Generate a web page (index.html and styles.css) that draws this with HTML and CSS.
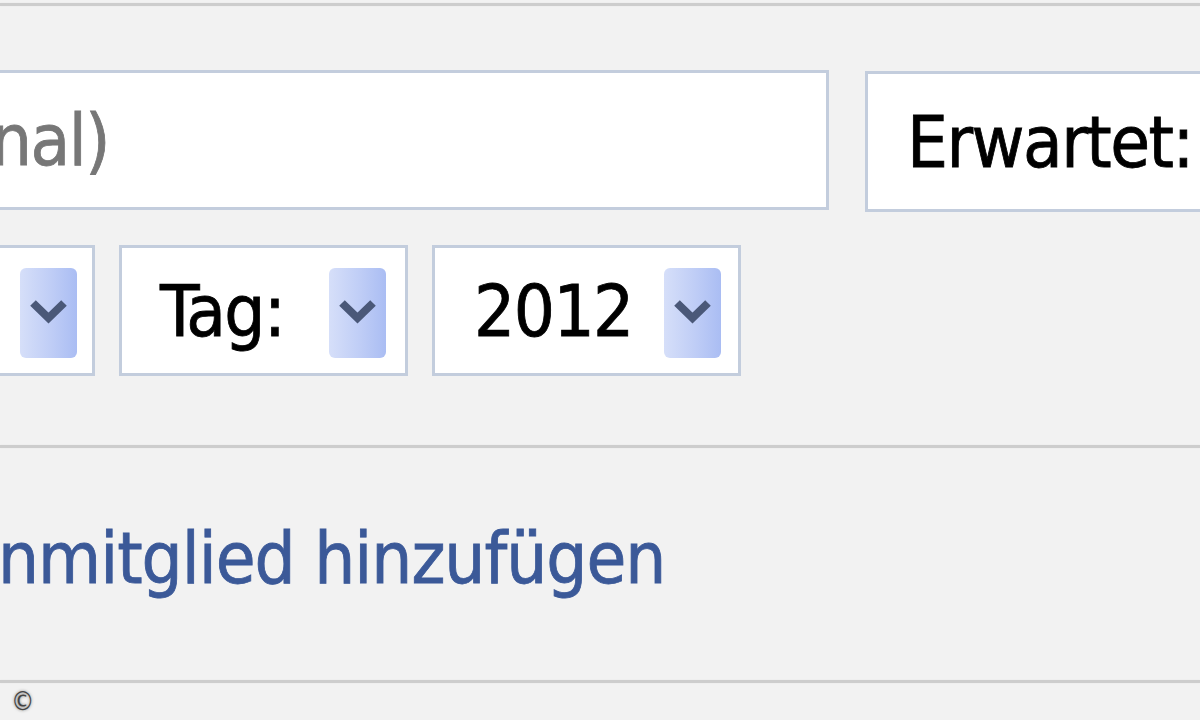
FILE: index.html
```html
<!DOCTYPE html>
<html lang="de">
<head>
  <meta charset="UTF-8" />
  <title>Familienmitglied hinzufügen</title>
  <link rel="stylesheet" href="styles.css">
</head>
<body>

  <div class="rule top"></div>

  <!-- Name / Beziehung -->
  <div class="row first">
    <div class="field name">
      <span class="cut ph">Name (optional)</span>
    </div>
    <div class="field relation">
      <span>Erwartet:</span>
    </div>
  </div>

  <!-- Datum -->
  <div class="row dates">
    <div class="select month">
      <span>Monat:</span>
      <span class="arrow"><svg viewBox="0 0 57 90" width="57" height="90"><path d="M13 35 L28.5 50 L44 35" /></svg></span>
    </div>
    <div class="select day">
      <span>Tag:</span>
      <span class="arrow"><svg viewBox="0 0 57 90" width="57" height="90"><path d="M13 35 L28.5 50 L44 35" /></svg></span>
    </div>
    <div class="select year">
      <span>2012</span>
      <span class="arrow"><svg viewBox="0 0 57 90" width="57" height="90"><path d="M13 35 L28.5 50 L44 35" /></svg></span>
    </div>
  </div>

  <div class="rule mid"></div>

  <div class="addrow">
    <a href="#" class="add"><span class="cut lead">Familie</span>nmitglied hinzufügen</a>
  </div>

  <div class="rule bottom"></div>

  <div class="copy">&copy;</div>

</body>
</html>
```

FILE: styles.css
```css
html, body {
  margin: 0;
  padding: 0;
  background: #f2f2f2;
  overflow: hidden;
  height: 720px;
}
body {
  font-family: "DejaVu Sans Condensed", "DejaVu Sans", sans-serif;
  font-stretch: condensed;
  font-size: 72px;
  letter-spacing: -1.5px;
  color: #000;
  -webkit-text-stroke: 0.8px currentColor;
}
.rule {
  height: 3px;
  background: #cdcdcd;
  box-shadow: 0 0 1px #d8d8d8;
}
.rule.top {
  margin-top: 3px;
}
.rule.mid {
  margin-top: 69px;
}
.rule.bottom {
  margin-top: 1px;
}
.row {
  display: flex;
  align-items: flex-start;
  white-space: nowrap;
}
.row.first {
  margin-top: 65px;
  gap: 36px;
}
.row.dates {
  margin-top: 33px;
  gap: 24px;
}
.field, .select {
  box-sizing: border-box;
  background: #fff;
  border: 3px solid #c3cddd;
  display: flex;
  align-items: center;
  flex-shrink: 0;
}
.field.name {
  margin-left: -700px;
  margin-top: -1px;
  width: 1529px;
  height: 140px;
}
.field.relation {
  width: 400px;
  height: 141px;
  padding-left: 39px;
}
.ph {
  color: #777;
}
.cut {
  display: inline-block;
  text-align: right;
  white-space: nowrap;
}
.field.name .cut {
  width: 806px;
}
.select {
  height: 131px;
  padding-right: 19px;
}
.select .arrow {
  margin-left: auto;
  margin-top: 5px;
  width: 57px;
  height: 90px;
  border-radius: 6px;
  background: linear-gradient(to right, #d6dff9, #bfcdf6 55%, #aabdf3);
  display: block;
}
.arrow svg {
  display: block;
}
.arrow path {
  fill: none;
  stroke: #4a5878;
  stroke-width: 8;
}
.select.month {
  margin-left: -300px;
  width: 395px;
  padding-right: 15px;
}
.select.day {
  width: 289px;
  padding-left: 38px;
}
.select.year {
  width: 309px;
  padding-left: 39px;
  padding-right: 17px;
}
.addrow {
  padding-top: 68px;
  height: 163px;
  white-space: nowrap;
}
.add {
  color: #3b5998;
  text-decoration: none;
  letter-spacing: -1px;
  margin-left: -402px;
  display: inline-block;
}
.add .lead {
  width: 400px;
}
.copy {
  font-family: "DejaVu Sans", sans-serif;
  font-size: 26px;
  line-height: 26px;
  letter-spacing: 0;
  -webkit-text-stroke: 0;
  color: #444;
  text-shadow: 0 0 3px #777;
  padding: 5px 0 0 11px;
}
```
